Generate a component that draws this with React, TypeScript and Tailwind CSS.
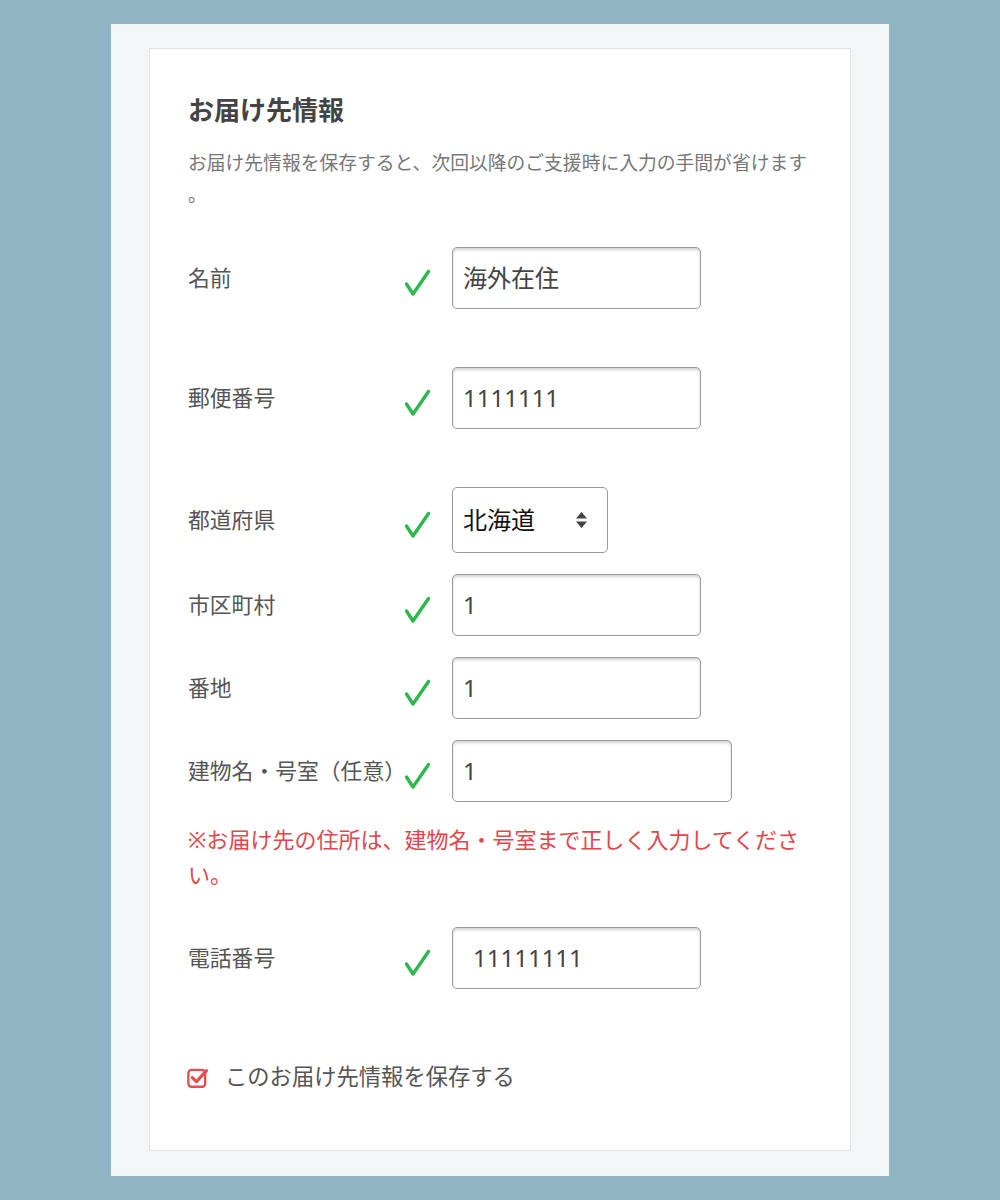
import React from "react";

const FONT = { fontFamily: '"Noto Sans", "Noto Sans CJK JP", sans-serif' };

function Check() {
  return (
    <svg width="28" height="28" viewBox="0 0 28 28" className="mt-[10px] shrink-0">
      <path d="M3.5 15 L10 25 L25.5 2.5" fill="none" stroke="#2db84d" strokeWidth="3.4" strokeLinecap="round" strokeLinejoin="round" />
    </svg>
  );
}

function Row({ label, children, className = "" }: { label: string; children: React.ReactNode; className?: string }) {
  return (
    <div className={"flex items-center " + className}>
      <div className="w-[215px] shrink-0 whitespace-nowrap text-[21.8px] leading-[30px] text-[#555]">{label}</div>
      <Check />
      <div className="ml-[21px]">{children}</div>
    </div>
  );
}

function Input({ value, w = "w-[249px]", pl = "pl-[10px]" }: { value: string; w?: string; pl?: string }) {
  return (
    <div
      className={
        "flex h-[62px] items-center rounded-[5px] border border-[#9a9a9a] bg-white text-[24px] text-[#444] shadow-[inset_0_2px_3px_rgba(0,0,0,0.18)] " +
        w +
        " " +
        pl
      }
    >
      {value}
    </div>
  );
}

export default function App() {
  return (
    <div className="min-h-[1200px] w-full bg-[#91b4c5] pt-[24px]" style={FONT}>
      <div className="mx-auto w-[778px] bg-[#f3f6f7] pl-[38px] pr-[38px] pt-[24px] pb-[25px]">
        <div className="border border-[#e2e4e5] bg-white px-[38px] pt-[43px] pb-[57px]">
          <h2 className="text-[26px] font-bold leading-[36px] text-[#444]">お届け先情報</h2>
          <p className="mt-[19px] text-[18.8px] leading-[32px] text-[#777] [line-break:anywhere]">
            お届け先情報を保存すると、次回以降のご支援時に入力の手間が省けます。
          </p>

          <Row label="名前" className="mt-[36px]">
            <Input value="海外在住" />
          </Row>
          <Row label="郵便番号" className="mt-[58px]">
            <Input value="1111111" />
          </Row>
          <Row label="都道府県" className="mt-[58px]">
            <div className="flex h-[66px] w-[156px] items-center justify-between rounded-[5px] border border-[#9a9a9a] bg-white pl-[10px] pr-[19px] text-[24px] text-[#111]">
              <span>北海道</span>
              <svg width="13" height="18" viewBox="0 0 13 18">
                <path d="M6.5 1 L12 7.5 L1 7.5 Z" fill="#444" />
                <path d="M6.5 17 L12 10.5 L1 10.5 Z" fill="#444" />
              </svg>
            </div>
          </Row>
          <Row label="市区町村" className="mt-[21px]">
            <Input value="1" />
          </Row>
          <Row label="番地" className="mt-[21px]">
            <Input value="1" />
          </Row>
          <Row label="建物名・号室（任意）" className="mt-[21px]">
            <Input value="1" w="w-[280px]" />
          </Row>

          <p className="mt-[20px] text-[22px] leading-[35px] text-[#e0474c] [line-break:anywhere]">
            ※お届け先の住所は、建物名・号室まで正しく入力してください。
          </p>

          <Row label="電話番号" className="mt-[35px]">
            <Input value="11111111" pl="pl-[20px]" />
          </Row>

          <div className="mt-[72px] flex h-[32px] items-center">
            <svg width="21" height="21" viewBox="0 0 20 20" className="-ml-[1px] shrink-0">
              <rect x="1.3" y="2.8" width="16" height="16" rx="3" fill="none" stroke="#e74c4c" strokeWidth="2.2" />
              <path d="M5 10 L9 14 L18.5 3.5" fill="none" stroke="#e74c4c" strokeWidth="3" strokeLinecap="round" strokeLinejoin="round" />
            </svg>
            <span className="ml-[17px] text-[22.3px] leading-[32px] text-[#555]">このお届け先情報を保存する</span>
          </div>
        </div>
      </div>
    </div>
  );
}
